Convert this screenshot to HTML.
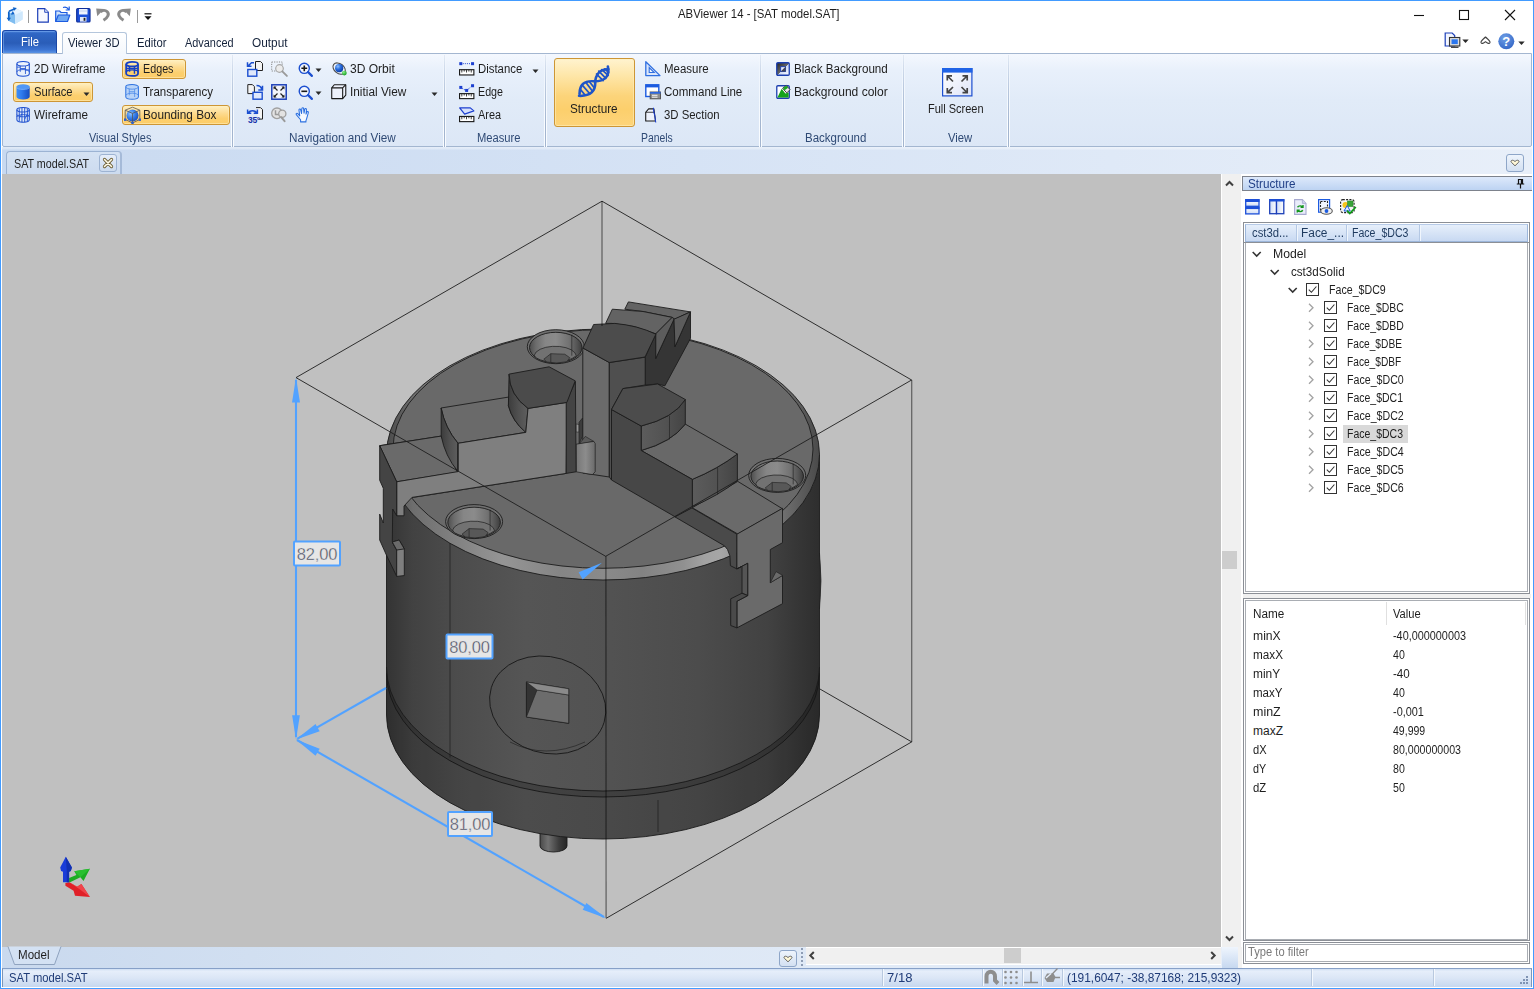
<!DOCTYPE html>
<html lang="en"><head><meta charset="utf-8"><title>ABViewer 14 - [SAT model.SAT]</title>
<style>
*{box-sizing:border-box;margin:0;padding:0}
html,body{width:1534px;height:989px;overflow:hidden;background:#fff}
body{font-family:"Liberation Sans",sans-serif;font-size:12px;color:#1e1e1e;position:relative}
.a{position:absolute}
.t{position:absolute;white-space:nowrap;line-height:14px;height:14px}
svg{position:absolute;overflow:visible}
/* window frame */
#frame{left:0;top:0;width:1534px;height:989px;border:1px solid #429bff;box-shadow:inset 0 0 0 1px #fff;pointer-events:none;z-index:50}
/* ribbon */
#ribbon{left:2px;top:53px;width:1530px;height:94px;border:1px solid #a3b6d0;border-radius:0 0 2px 2px;background:linear-gradient(#f4f8fe 0,#e8f0fb 18%,#e1ebf8 50%,#dce7f6 100%)}
.gsep{top:55px;width:3px;height:92px;margin-left:-1px;background:linear-gradient(90deg,#f9fcff 0,#f9fcff 1px,#a3b5cf 1px,#a3b5cf 2px,#f9fcff 2px,#f9fcff 3px);-webkit-mask-image:linear-gradient(to bottom,rgba(0,0,0,.2) 0,rgba(0,0,0,.7) 40%,#000 75%);mask-image:linear-gradient(to bottom,rgba(0,0,0,.2) 0,rgba(0,0,0,.7) 40%,#000 75%)}
.glabel{color:#2f4a75}
.hot{border:1px solid #cd9636;border-radius:3px;background:linear-gradient(#fff0c2 0,#fddb90 40%,#fccf6e 70%,#fdcd69 100%);box-shadow:inset 0 0 0 1px rgba(255,240,190,.55)}
.big{background:linear-gradient(#fff3cf 0,#fee6a8 25%,#fcd47a 55%,#fccf6c 75%,#fdd47a 100%)}
.rt{color:#15233b}
#filebtn{left:2px;top:30px;width:55px;height:23px;border-radius:3px 3px 0 0;border:1px solid #1a47a6;border-bottom:none;background:linear-gradient(#4a80d8 0,#2f66c4 12%,#2a5db8 55%,#3c74d2 85%,#5a94e6 100%);box-shadow:inset 1px 1px 0 rgba(120,170,240,.6)}
#tabact{left:62px;top:32px;width:65px;height:22px;border:1px solid #b4c6dc;border-bottom:none;border-radius:3px 3px 0 0;background:linear-gradient(#ffffff,#f3f7fc)}
#docrow{left:2px;top:147px;width:1530px;height:27px;background:linear-gradient(rgba(255,255,255,.45) 0,rgba(255,255,255,.3) 2px,rgba(255,255,255,0) 3px),linear-gradient(90deg,#c8d9f0 0,#d6e3f5 45%,#e8eff9 100%)}
#doctab{left:6px;top:151px;width:116px;height:23px;border:1px solid #9cb3d3;border-right:2px solid #a5bad8;border-bottom:none;border-radius:4px 4px 0 0;background:linear-gradient(#d5e2f3,#ccdbef)}
#viewport{left:2px;top:174px;width:1219px;height:773px;background:#c0c0c0}
#vscroll{left:1221px;top:174px;width:20px;height:773px;background:#f0f0f0;border-left:1px solid #fff}
#rightbg{left:1241px;top:174px;width:291px;height:793px;background:#fff}
#bottomrow{left:2px;top:947px;width:1239px;height:21px;background:linear-gradient(90deg,#c9d9ee 0,#d9e5f4 40%,#e8eff9 100%)}
#status{left:2px;top:968px;width:1530px;height:20px;border:1px solid #7e96b8;border-top:1px solid #86a0c8;background:linear-gradient(#cfdef3 0,#e6eefa 12%,#dbe6f6 50%,#c6d7ef 100%)}
.panel{background:#fff;border:1px solid #8e8f8f}
.tree .t{color:#1e1e1e}
</style></head><body>

<!-- title bar -->
<div class="t" style="left:678px;top:7px;color:#1e1e1e;transform:scaleX(0.947);transform-origin:0 50%">ABViewer 14 - [SAT model.SAT]</div>

<!-- QAT -->
<svg style="left:6px;top:7px" width="18" height="18" viewBox="0 0 18 18"><path d="M2,5L10,1.500l6.500,3v8l-7.500,4.500-7-3.500z" fill="#bfe0fb"/><path d="M2,5l7,3v9l-7-3.500z" fill="#7fbdf0"/><path d="M9,8l7.500-3.500v8l-7.500,4.500z" fill="#cfe8fc"/><path d="M2,5L10,1.500l6.500,3-7.500,3.500z" fill="#e6f4ff"/><g stroke="#0f62c8" stroke-width="1.700" fill="none"><path d="M2.800,4.500v7.500"/><path d="M3,4.300l5.500-2.300"/></g><g fill="#0f62c8"><path d="M0.600,10.800h4.400l-2.200,3.200z"/><path d="M6.800,0.300l4,0.700-2.600,2.700z"/><path d="M4.800,7.500l2-3.600 2,3.600z"/></g></svg>
<div class="a" style="left:28px;top:10px;width:1px;height:13px;background:#9a9a9a"></div>
<svg style="left:37px;top:8px" width="12" height="15" viewBox="0 0 12 15"><path d="M0.700,0.700h7l3.600,3.600v9.900H0.700z" fill="#f7f9ff" stroke="#1c3fb8" stroke-width="1.200"/><path d="M7.700,0.700v3.600h3.600" fill="#dde6fa" stroke="#1c3fb8" stroke-width="0.900"/></svg>
<svg style="left:55px;top:6px" width="16" height="17" viewBox="0 0 16 17"><path d="M0.700,15.500V5h4l1.300,1.500h6V9" fill="#cfe3fb" stroke="#1c5be0" stroke-width="1.200"/><path d="M0.700,15.500L3.300,9h11.500l-2.300,6.500z" fill="#6fa8f2" stroke="#1c5be0" stroke-width="1.200" stroke-linejoin="round"/><path d="M8,1.500c2.500-0.800 4.500,0 5.500,2M14.200,0.500v3.500h-3.500" fill="none" stroke="#1c5be0" stroke-width="1.200"/></svg>
<svg style="left:76px;top:8px" width="15" height="15" viewBox="0 0 15 15"><rect x="0.700" y="0.700" width="13.300" height="13.300" rx="1" fill="#1c4fd8" stroke="#0f2f9a" stroke-width="1.200"/><rect x="3" y="1" width="8.500" height="5.500" fill="#eef3ff"/><path d="M3,3h8.500" stroke="#b9c6e8" stroke-width="0.800"/><rect x="4" y="9" width="6.500" height="4.600" fill="#dfe6f7"/><rect x="7.600" y="9.800" width="1.800" height="3" fill="#222"/></svg>
<svg style="left:96px;top:8px" width="15" height="13" viewBox="0 0 15 13"><path d="M7.500,12.300c4.500-2.800 6.200-6.300 3.500-8.800c-2-1.800-4.800-1.200-6.500,0.500" fill="none" stroke="#8a8a8a" stroke-width="3"/><path d="M0.200,0.500l7.800,0.600-6.800,7.200z" fill="#8a8a8a"/></svg>
<svg style="left:116px;top:8px" width="15" height="13" viewBox="0 0 15 13"><path d="M7.500,12.300c-4.500-2.800-6.200-6.300-3.500-8.800c2-1.800 4.800-1.200 6.500,0.500" fill="none" stroke="#8a8a8a" stroke-width="3"/><path d="M14.800,0.500l-7.800,0.600 6.800,7.200z" fill="#8a8a8a"/></svg>
<div class="a" style="left:137px;top:10px;width:1px;height:13px;background:#9a9a9a"></div>
<svg style="left:144px;top:13px" width="8" height="8" viewBox="0 0 8 8"><path d="M0.500,0.800h7" stroke="#111" stroke-width="1.200"/><path d="M0.500,3.200h7l-3.500,3.800z" fill="#111"/></svg>
<!-- window controls -->
<svg style="left:1410px;top:6px" width="110" height="18" viewBox="0 0 110 18"><path d="M4,9.500h10" stroke="#111" stroke-width="1.100"/><rect x="49.500" y="4.500" width="9" height="9" fill="none" stroke="#111" stroke-width="1.100"/><path d="M95,4l10,10M105,4L95,14" stroke="#111" stroke-width="1.100"/></svg>
<!-- right mini icons -->
<svg style="left:1444px;top:32px" width="17" height="17" viewBox="0 0 17 17"><path d="M1.200,1h7l2.500,2.500V14H1.200z" fill="#f3f6ff" stroke="#1c3fb8" stroke-width="1.200"/><rect x="5.500" y="5.500" width="10.300" height="8.500" fill="#ddd" stroke="#333" stroke-width="1.100"/><rect x="7.500" y="7.300" width="6.300" height="4.800" fill="#2a76ee"/><path d="M7,15.300h7.500" stroke="#333" stroke-width="1.200"/></svg>
<svg style="left:1462px;top:39px" width="8" height="5"><path d="M0.300,0.500h6.400l-3.200,3.600z" fill="#2a2a2a"/></svg>
<svg style="left:1480px;top:36px" width="11" height="9" viewBox="0 0 11 9"><path d="M1,6.500c-0.500,-1.500 2.500,-3.500 4.500,-5.500c2,2 5,4 4.500,5.500c-0.600,1.500-2.500,1-4.500-0.800c-2,1.800-3.900,2.300-4.500,0.800z" fill="#fff" stroke="#444" stroke-width="1.100" stroke-linejoin="round"/></svg>
<svg style="left:1498px;top:33px" width="17" height="17" viewBox="0 0 17 17"><defs><radialGradient id="gHelp" cx="0.400" cy="0.300" r="0.800"><stop offset="0" stop-color="#6f9fe6"/><stop offset="1" stop-color="#2f62c4"/></radialGradient></defs><circle cx="8.300" cy="8.300" r="8" fill="url(#gHelp)"/><text x="8.300" y="13" text-anchor="middle" font-family="Liberation Sans, sans-serif" font-weight="bold" font-size="13" fill="#fff">?</text></svg>
<svg style="left:1518px;top:41px" width="8" height="5"><path d="M0.300,0.500h6.400l-3.200,3.600z" fill="#2a2a2a"/></svg>

<!-- tab row -->
<div class="a" id="filebtn"></div>
<div class="t" style="left:21px;top:35px;color:#fff;transform:scaleX(0.931);transform-origin:0 50%">File</div>
<div class="a" id="ribbon"></div>
<div class="a" id="tabact"></div>
<div class="t rt" style="left:68px;top:36px;transform:scaleX(0.934);transform-origin:0 50%">Viewer 3D</div>
<div class="t rt" style="left:137px;top:36px;transform:scaleX(0.941);transform-origin:0 50%">Editor</div>
<div class="t rt" style="left:185px;top:36px;transform:scaleX(0.909);transform-origin:0 50%">Advanced</div>
<div class="t rt" style="left:252px;top:36px;transform:scaleX(0.985);transform-origin:0 50%">Output</div>

<!-- group separators -->
<div class="a gsep" style="left:232px"></div>
<div class="a gsep" style="left:444px"></div>
<div class="a gsep" style="left:545px"></div>
<div class="a gsep" style="left:760px"></div>
<div class="a gsep" style="left:903px"></div>
<div class="a gsep" style="left:1008px"></div>
<!-- hot buttons -->
<div class="a hot" style="left:122px;top:59px;width:64px;height:20px"></div>
<div class="a hot" style="left:13px;top:82px;width:80px;height:20px"></div>
<div class="a hot" style="left:122px;top:105px;width:108px;height:20px"></div>
<div class="a hot big" style="left:554px;top:58px;width:81px;height:69px"></div>
<!-- labels -->
<div class="t" style="left:34px;top:62px;transform:scaleX(0.966);transform-origin:0 50%">2D Wireframe</div>
<div class="t" style="left:34px;top:85px;transform:scaleX(0.933);transform-origin:0 50%">Surface</div>
<div class="t" style="left:34px;top:108px;transform:scaleX(0.976);transform-origin:0 50%">Wireframe</div>
<div class="t" style="left:143px;top:62px;transform:scaleX(0.896);transform-origin:0 50%">Edges</div>
<div class="t" style="left:143px;top:85px;transform:scaleX(0.960);transform-origin:0 50%">Transparency</div>
<div class="t" style="left:143px;top:108px;transform:scaleX(0.983);transform-origin:0 50%">Bounding Box</div>
<div class="t glabel" style="left:89px;top:131px;transform:scaleX(0.911);transform-origin:0 50%">Visual Styles</div>
<div class="t" style="left:350px;top:62px;transform:scaleX(1.003);transform-origin:0 50%">3D Orbit</div>
<div class="t" style="left:350px;top:85px;transform:scaleX(0.985);transform-origin:0 50%">Initial View</div>
<div class="t glabel" style="left:289px;top:131px;transform:scaleX(0.978);transform-origin:0 50%">Navigation and View</div>
<div class="t" style="left:478px;top:62px;transform:scaleX(0.947);transform-origin:0 50%">Distance</div>
<div class="t" style="left:478px;top:85px;transform:scaleX(0.892);transform-origin:0 50%">Edge</div>
<div class="t" style="left:478px;top:108px;transform:scaleX(0.907);transform-origin:0 50%">Area</div>
<div class="t glabel" style="left:477px;top:131px;transform:scaleX(0.932);transform-origin:0 50%">Measure</div>
<div class="t" style="left:570px;top:102px;transform:scaleX(0.978);transform-origin:0 50%">Structure</div>
<div class="t" style="left:664px;top:62px;transform:scaleX(0.955);transform-origin:0 50%">Measure</div>
<div class="t" style="left:664px;top:85px;transform:scaleX(0.962);transform-origin:0 50%">Command Line</div>
<div class="t" style="left:664px;top:108px;transform:scaleX(0.947);transform-origin:0 50%">3D Section</div>
<div class="t glabel" style="left:641px;top:131px;transform:scaleX(0.866);transform-origin:0 50%">Panels</div>
<div class="t" style="left:794px;top:62px;transform:scaleX(0.970);transform-origin:0 50%">Black Background</div>
<div class="t" style="left:794px;top:85px;transform:scaleX(1.004);transform-origin:0 50%">Background color</div>
<div class="t glabel" style="left:805px;top:131px;transform:scaleX(0.957);transform-origin:0 50%">Background</div>
<div class="t" style="left:928px;top:102px;transform:scaleX(0.916);transform-origin:0 50%">Full Screen</div>
<div class="t glabel" style="left:948px;top:131px;transform:scaleX(0.938);transform-origin:0 50%">View</div>
<!-- dropdown arrows -->
<svg style="left:82.5px;top:92px" width="8" height="5"><path d="M0.5,0.5h6l-3,3.4z" fill="#2a2a2a"/></svg>
<svg style="left:314.5px;top:68px" width="8" height="5"><path d="M0.5,0.5h6l-3,3.4z" fill="#2a2a2a"/></svg>
<svg style="left:314.5px;top:91px" width="8" height="5"><path d="M0.5,0.5h6l-3,3.4z" fill="#2a2a2a"/></svg>
<svg style="left:431px;top:92px" width="8" height="5"><path d="M0.5,0.5h6l-3,3.4z" fill="#2a2a2a"/></svg>
<svg style="left:532px;top:69px" width="8" height="5"><path d="M0.5,0.5h6l-3,3.4z" fill="#2a2a2a"/></svg>
<!-- 2D Wireframe -->
<svg style="left:16px;top:61px" width="14.2" height="16" viewBox="0 0 15 17"><g fill="none" stroke="#1d4fcf" stroke-width="1.1"><ellipse cx="7.5" cy="3" rx="6.6" ry="2.4"/><path d="M0.9,3v10.5a6.6,2.6 0 0 0 13.2,0V3"/><path d="M0.9,11.5a6.6,2.4 0 0 1 13.2,0" stroke-width="0.9"/><path d="M4.5,5v6.5M10,5.3v8.5M4.5,8h5.5M1,6.5h3.5M10,9.5h4" stroke-width="0.9"/></g></svg>
<!-- Surface -->
<svg style="left:16px;top:84px" width="14.2" height="16" viewBox="0 0 15 17"><defs><linearGradient id="gSf" x1="0" x2="1"><stop offset="0" stop-color="#3f8df3"/><stop offset="0.35" stop-color="#2f7df0"/><stop offset="1" stop-color="#164dc0"/></linearGradient></defs><path d="M0.5,3v10.5a7,2.9 0 0 0 14,0V3z" fill="url(#gSf)"/><ellipse cx="7.5" cy="3" rx="7" ry="2.7" fill="#4f97f5"/><path d="M0.6,3.6a7,2.6 0 0 0 13.8,0" fill="none" stroke="#8fc0ff" stroke-width="0.7"/></svg>
<!-- Wireframe -->
<svg style="left:16px;top:107px" width="14.2" height="16" viewBox="0 0 15 17"><g fill="none" stroke="#1d4fcf" stroke-width="1.1"><ellipse cx="7.5" cy="3" rx="6.6" ry="2.4"/><path d="M0.9,3v10.5a6.6,2.6 0 0 0 13.2,0V3"/><path d="M3.4,1.5v14M6.3,0.8v15.5M9.2,0.8v15.5M12,1.5v14" stroke-width="1"/><path d="M0.9,8a6.6,2.4 0 0 0 13.2,0M0.9,10.5a6.6,2.4 0 0 1 13.2,0" stroke-width="0.9"/><path d="M3.4,12l3-5M9.2,13l3-6" stroke-width="0.8"/></g></svg>
<!-- Edges -->
<svg style="left:125px;top:61px" width="14.2" height="16" viewBox="0 0 15 17"><g fill="none" stroke="#1540c4" stroke-width="1.9"><ellipse cx="7.5" cy="3.4" rx="6.3" ry="2.4"/><path d="M1.2,3.4v9.8a6.3,2.6 0 0 0 12.6,0V3.4"/><path d="M1.2,11.8a6.3,2.4 0 0 1 12.6,0" stroke-width="1.5"/><path d="M4.8,5.4v6M10,5.5v8M1.2,8h12.4" stroke-width="1.5"/></g></svg>
<!-- Transparency -->
<svg style="left:125px;top:84px" width="14.2" height="16" viewBox="0 0 15 17"><path d="M0.8,3v10.5a6.7,2.7 0 0 0 13.4,0V3a6.7,2.5 0 0 0 -13.4,0z" fill="#a9cbf7" fill-opacity="0.75" stroke="#2f73e0" stroke-width="1.1"/><path d="M0.8,3a6.7,2.5 0 0 0 13.4,0" fill="none" stroke="#4a88e8" stroke-width="0.9"/><path d="M4.5,5v7M10.2,5.3v8.5M4.5,8.2h5.7M1,11.6a6.7,2.4 0 0 1 13,0" fill="none" stroke="#4a88e8" stroke-width="0.8"/></svg>
<!-- Bounding box -->
<svg style="left:124px;top:106px" width="17" height="18" viewBox="0 0 17 18"><defs><radialGradient id="gBb" cx="0.35" cy="0.35" r="0.7"><stop offset="0" stop-color="#8fc4ff"/><stop offset="0.5" stop-color="#3a82ea"/><stop offset="1" stop-color="#1a50c0"/></radialGradient></defs><circle cx="8.5" cy="9.5" r="6" fill="url(#gBb)"/><g fill="none" stroke="#555" stroke-width="0.8"><path d="M1.2,4.2L8.5,1.2l7.3,3v9.2l-7.3,3.6-7.3-3.6z"/><path d="M1.2,4.2l7.3,3.2 7.3-3.2M8.5,7.4v9.6"/></g><g fill="#2a5fd0"><rect x="0" y="12.5" width="2.4" height="2.4"/><rect x="14.6" y="12.5" width="2.4" height="2.4"/><rect x="7.3" y="15.6" width="2.4" height="2.4"/></g></svg>

<!-- nav col 1 -->
<svg style="left:247px;top:61px" width="16" height="16" viewBox="0 0 16 16"><path d="M8.5,0.5h5l2,2v7h-7z" fill="#f4f4f4" stroke="#222" stroke-width="1"/><rect x="0.8" y="8.5" width="9" height="6.7" fill="#dfe8fb" stroke="#1c4fd0" stroke-width="1.4"/><path d="M0.5,1.2v4h4M1,5l3.5-3.2h2.5" fill="none" stroke="#1c4fd0" stroke-width="1.5"/></svg>
<svg style="left:247px;top:84px" width="16" height="16" viewBox="0 0 16 16"><path d="M0.8,0.6h4.6l2,2v7H0.8z" fill="#f4f4f4" stroke="#222" stroke-width="1"/><rect x="6" y="8.3" width="9.2" height="6.9" fill="#dfe8fb" stroke="#1c4fd0" stroke-width="1.4"/><path d="M9.5,1.5c3,0 4.8,1.2 5.3,4M15.5,1.8v4.2h-4.2" fill="none" stroke="#1c4fd0" stroke-width="1.5"/></svg>
<svg style="left:247px;top:107px" width="17" height="16" viewBox="0 0 17 16"><path d="M9,0.6h4.5l2,2v9.5h-4" fill="#f4f4f4" stroke="#222" stroke-width="1"/><path d="M1.5,5.5c1.5-2.5 6-2.5 8,0M0.6,2.5v3.7h3.7M10.4,2.5v3.7h-3.7" fill="none" stroke="#1c4fd0" stroke-width="1.5"/><text x="1" y="15.8" font-family="Liberation Sans, sans-serif" font-size="8.5" font-weight="bold" fill="#1430a8" letter-spacing="-0.3">35°</text></svg>
<!-- nav col 2 -->
<svg style="left:271px;top:61px" width="17" height="17" viewBox="0 0 17 17"><rect x="0.7" y="1" width="10.5" height="9" fill="none" stroke="#8a8a8a" stroke-width="1" stroke-dasharray="1.2 1.2"/><circle cx="8.5" cy="7.5" r="3.8" fill="#ececec" stroke="#a8a8a8" stroke-width="1.2"/><path d="M11.3,10.3l4.6,4.6" stroke="#9a9a9a" stroke-width="1.9" stroke-linecap="round"/></svg>
<svg style="left:271px;top:84px" width="16" height="16" viewBox="0 0 16 16"><rect x="0.8" y="0.8" width="14.4" height="14.4" fill="#f2f4fb" stroke="#1c3fb8" stroke-width="1.5"/><g stroke="#222" stroke-width="1.2" fill="#222"><path d="M6.5,6.5L3,3M9.5,6.5L13,3M6.5,9.5L3,13M9.5,9.5L13,13"/><path d="M2.6,2.6h3l-3,3zM13.4,2.6h-3l3,3zM2.6,13.4h3l-3-3zM13.4,13.4h-3l3-3z" stroke="none"/></g></svg>
<svg style="left:271px;top:107px" width="17" height="16" viewBox="0 0 17 16"><circle cx="6" cy="6.3" r="5.3" fill="#e3e3e3" stroke="#a0a0a0" stroke-width="1.3"/><path d="M4.5,3.2v4.3h4" fill="none" stroke="#9a9a9a" stroke-width="1.5"/><circle cx="11.3" cy="6.8" r="3.6" fill="#e3e3e3" stroke="#a0a0a0" stroke-width="1.3"/><path d="M10.2,10.2l3.4,4" stroke="#9a9a9a" stroke-width="2" stroke-linecap="round"/></svg>
<!-- zoom in / out -->
<svg style="left:298px;top:62px" width="15" height="16" viewBox="0 0 16 17"><circle cx="6.7" cy="6.7" r="5.4" fill="#f1f5fd" stroke="#1c4fd0" stroke-width="1.5"/><path d="M3.6,6.7h6.2M6.7,3.6v6.2" stroke="#1a1a1a" stroke-width="1.7"/><path d="M10.8,10.8l4,4" stroke="#1c4fd0" stroke-width="2.4" stroke-linecap="round"/></svg>
<svg style="left:298px;top:85px" width="15" height="16" viewBox="0 0 16 17"><circle cx="6.7" cy="6.7" r="5.4" fill="#f1f5fd" stroke="#1c4fd0" stroke-width="1.5"/><path d="M3.6,6.7h6.2" stroke="#1a1a1a" stroke-width="1.7"/><path d="M10.8,10.8l4,4" stroke="#1c4fd0" stroke-width="2.4" stroke-linecap="round"/></svg>
<!-- hand -->
<svg style="left:295px;top:106.5px" width="15.5" height="16" viewBox="0 0 18 18"><path d="M6.5,17v-2.5L1.5,8.6c-0.8-1.3 0.8-2.2 1.7-1.2l2.3,2.6L4.6,3.4c-0.2-1.5 1.7-1.8 2-0.4l1,4.3L7.9,1.7c0-1.5 2-1.5 2.1-0.1l0.5,5.4 0.8-4.6c0.3-1.4 2.1-1.1 2,0.3l-0.5,5.3 1-2.4c0.5-1.2 2.1-0.6 1.7,0.7l-1.8,6.3c-0.3,1.4-0.8,2.4-1,3.2V17z" fill="#f5f9ff" stroke="#2a6fe0" stroke-width="1.2" stroke-linejoin="round"/></svg>
<!-- 3D orbit -->
<svg style="left:331.5px;top:61px" width="15.5" height="15.5" viewBox="0 0 18 18"><defs><radialGradient id="gOrb" cx="0.35" cy="0.3" r="0.75"><stop offset="0" stop-color="#8fc0ff"/><stop offset="0.45" stop-color="#2a6fe0"/><stop offset="1" stop-color="#0c3aa0"/></radialGradient><radialGradient id="gGrn" cx="0.35" cy="0.3" r="0.75"><stop offset="0" stop-color="#8af08a"/><stop offset="1" stop-color="#0f9a1c"/></radialGradient></defs><ellipse cx="8.3" cy="8.8" rx="8" ry="5.6" transform="rotate(38 8.3 8.8)" fill="none" stroke="#4a4a4a" stroke-width="1.2"/><circle cx="8.3" cy="8.3" r="4.7" fill="url(#gOrb)"/><circle cx="14.3" cy="14" r="2.8" fill="url(#gGrn)"/></svg>
<!-- initial view cube -->
<svg style="left:331px;top:84px" width="15.5" height="15.5" viewBox="0 0 17 17"><path d="M0.8,4.2L3.6,0.8h12.6v11.4l-3.4,3.8H0.8z" fill="#eef2fc" stroke="#1a1a1a" stroke-width="1.2" stroke-linejoin="round"/><path d="M0.8,4.2h12v11.8M12.8,4.2l3.4-3.4" fill="none" stroke="#1a1a1a" stroke-width="1.2"/></svg>

<!-- measure group -->
<svg style="left:459px;top:61px" width="16" height="15.5" viewBox="0 0 17 16"><rect x="0.6" y="9" width="15.2" height="5.6" fill="#fff" stroke="#1a1a1a" stroke-width="1.2"/><path d="M3,9v3M5.5,9v2M8,9v3M10.5,9v2M13,9v3" stroke="#1a1a1a" stroke-width="0.9"/><rect x="0.3" y="1" width="3.2" height="3.2" fill="#1c3fd0"/><rect x="12.8" y="1" width="3.2" height="3.2" fill="#1c3fd0"/><path d="M4,2.6h8.5" stroke="#1c3fd0" stroke-width="1" stroke-dasharray="1.1 1.1"/></svg>
<svg style="left:459px;top:84px" width="16" height="15.5" viewBox="0 0 17 16"><rect x="0.6" y="10" width="15.2" height="5.3" fill="#fff" stroke="#1a1a1a" stroke-width="1.2"/><path d="M3,10v3M5.5,10v2M8,10v3M10.5,10v2M13,10v3" stroke="#1a1a1a" stroke-width="0.9"/><rect x="0.3" y="1.8" width="3.2" height="3.2" fill="#1c3fd0"/><rect x="12.8" y="0" width="3.2" height="3.2" fill="#1c3fd0"/><rect x="6.5" y="5" width="3.2" height="3.2" fill="#1c3fd0"/><path d="M3.5,4.5l3.5,2M9.5,5.5l3.5-3" stroke="#1c3fd0" stroke-width="1" stroke-dasharray="1.1 1.1"/></svg>
<svg style="left:459px;top:107px" width="16" height="15.5" viewBox="0 0 17 16"><rect x="0.6" y="9.8" width="15.2" height="5.5" fill="#fff" stroke="#1a1a1a" stroke-width="1.2"/><path d="M3,9.8v3M5.5,9.8v2M8,9.8v3M10.5,9.8v2M13,9.8v3" stroke="#1a1a1a" stroke-width="0.9"/><path d="M0.7,0.7h11.3l3.8,3.2-9.8,3.4z" fill="#d6e0fb" stroke="#1c3fd0" stroke-width="1.3" stroke-linejoin="round"/></svg>

<!-- DNA -->
<svg style="left:576.3px;top:65px" width="42.5" height="32.3" viewBox="0 0 42 34" preserveAspectRatio="none"><g fill="none" stroke="#1f55c8" stroke-linecap="round"><path d="M31.5,1.5c2.5,13-6,16-14.5,15.5C8,16.5 3.5,21 3.5,30.500" stroke-width="2.6"/><path d="M3,32.500c12,0.500 16-5.500 16-13.500C19,10 24,4 32,4.500" stroke-width="2.6"/><path d="M22.500,6.500l7,7.500M20.300,9.500l6.500,7M25.500,4.800l6.300,6.200M28.500,4l3.700,3.800M6.500,21.500l6.500,8M10,18.800l6,8.200M13.500,18l4.500,6M4.200,25.500l4.300,5.500" stroke-width="1.8"/></g></svg>

<!-- panels small icons -->
<svg style="left:645px;top:61px" width="16" height="16" viewBox="0 0 16 16"><path d="M0.8,0.8v13.8h14.2z" fill="#dbe6fb" stroke="#2f6fe0" stroke-width="1.3" stroke-linejoin="round"/><path d="M4.2,6.5v5h5z" fill="#f3f7ff" stroke="#2f6fe0" stroke-width="1.1"/></svg>
<svg style="left:645px;top:84px" width="17" height="16" viewBox="0 0 17 16"><rect x="0.8" y="0.8" width="13" height="11.7" fill="#fff" stroke="#1c5be0" stroke-width="1.4"/><rect x="0.8" y="0.8" width="13" height="2.6" fill="#1c5be0"/><rect x="5.2" y="8" width="10.3" height="6.8" fill="#8e8e8e" stroke="#555" stroke-width="1"/><rect x="5.2" y="8" width="10.3" height="1.7" fill="#2a66e0"/><path d="M7,11.3h5.5M7,13.200h5.500" stroke="#fff" stroke-width="0.9"/></svg>
<svg style="left:645px;top:107px" width="14.5" height="16.5" viewBox="0 0 16 17"><path d="M0.8,5.2L4,1.500h5.800l1.800,13.300H0.800z" fill="#eef2fc" stroke="#1a1a1a" stroke-width="1.2" stroke-linejoin="round"/><path d="M0.8,5.2h9.300" stroke="#1a1a1a" stroke-width="0.9" fill="none"/><path d="M9.300,0.300c0.300,3 0.300,5 1.200,7.500s0.600,5 1.400,8.700" fill="none" stroke="#1c3fd0" stroke-width="1.200"/></svg>

<!-- background group -->
<svg style="left:776px;top:62px" width="14" height="14" viewBox="0 0 15 15"><defs><linearGradient id="gBk" x1="0" y1="0" x2="1" y2="1"><stop offset="0" stop-color="#222"/><stop offset="0.5" stop-color="#666"/><stop offset="0.5" stop-color="#c9d6f5"/><stop offset="1" stop-color="#fff"/></linearGradient></defs><rect x="0.8" y="0.8" width="13.4" height="13.400" rx="1.2" fill="url(#gBk)" stroke="#1c3fb0" stroke-width="1.400"/><rect x="5" y="5" width="5.200" height="5.200" fill="#e6ecfb" stroke="#1c3fb0" stroke-width="1"/><path d="M5,10.200l5.200-5.200v5.200z" fill="#445"/></svg>
<svg style="left:776px;top:85px" width="15" height="14" viewBox="0 0 16 15"><rect x="0.8" y="0.8" width="13.400" height="13.400" rx="1.200" fill="#fff" stroke="#1c3fb0" stroke-width="1.400"/><path d="M1.500,13.500L6,4l4,5 3.500,-1v5.500z" fill="#14a21c"/><path d="M7,3.500l4-3 4,4.500-3.500,3.500z" fill="#e8e8e8" stroke="#333" stroke-width="1"/><path d="M7.500,3.300l3.500-2.600 2,2.200-3.800,2.600z" fill="#18a820"/></svg>

<!-- full screen -->
<svg style="left:942px;top:68px" width="31" height="29" viewBox="0 0 31 29"><defs><linearGradient id="gFs" x1="0" y1="0" x2="1" y2="1"><stop offset="0" stop-color="#fff"/><stop offset="1" stop-color="#dfe5f8"/></linearGradient></defs><rect x="0.600" y="0.600" width="29.300" height="27.300" fill="url(#gFs)" stroke="#1c4fd0" stroke-width="1.200"/><rect x="0" y="0" width="30.500" height="4.600" fill="#1f63e6"/><g stroke="#444" stroke-width="1.700" fill="none"><path d="M5.500,8l5.500,5.500M5.300,12.500v-4.700h4.700"/><path d="M25,8l-5.500,5.500M25.200,12.500v-4.700h-4.700"/><path d="M5.500,24.500l5.500-5.500M5.300,20v4.700h4.700"/><path d="M25,24.500l-5.500-5.500M25.200,20v4.700h-4.700"/></g></svg>



<!-- doc tab row -->
<div class="a" id="docrow"></div>
<div class="a" id="doctab"></div>
<div class="t" style="left:14px;top:157px;transform:scaleX(0.893);transform-origin:0 50%">SAT model.SAT</div>

<div class="a" style="left:99px;top:154px;width:18px;height:18px;border:1px solid #9db3d2;border-radius:3px;background:linear-gradient(#e6eefa,#cbdaee)"></div>
<svg style="left:103px;top:158px" width="10" height="10" viewBox="0 0 10 10"><path d="M1.500,1.500L8.500,8.500M8.500,1.500L1.500,8.500" stroke="#6b5d33" stroke-width="3.200" stroke-linecap="round"/><path d="M1.500,1.500L8.500,8.500M8.500,1.500L1.500,8.500" stroke="#fffbe8" stroke-width="1.600" stroke-linecap="round"/></svg>
<div class="a" style="left:1506px;top:154px;width:18px;height:18px;border:1px solid #8ea6c8;border-radius:3px;background:linear-gradient(#eef4fc,#d3e0f2)"></div>
<svg style="left:1510px;top:159px" width="10" height="8" viewBox="0 0 10 8"><path d="M5,6.800L1.300,3.200c-1.200-1.500 1.200-3.200 3.700-0.700c2.500-2.500 4.900-0.800 3.700,0.700z" fill="#fff8d8" stroke="#555" stroke-width="0.900"/></svg>
<!-- viewport -->
<div class="a" id="viewport"></div>
<svg id="model" class="a" style="left:0;top:0" width="1534" height="989" viewBox="0 0 1534 989">
<defs>
<linearGradient id="gBody" x1="387" x2="819" y1="0" y2="0" gradientUnits="userSpaceOnUse">
<stop offset="0" stop-color="#343434"/><stop offset="0.06" stop-color="#424242"/><stop offset="0.16" stop-color="#4c4c4c"/><stop offset="0.32" stop-color="#555555"/><stop offset="0.52" stop-color="#525252"/><stop offset="0.72" stop-color="#4c4c4c"/><stop offset="0.88" stop-color="#424242"/><stop offset="1" stop-color="#2e2e2e"/>
</linearGradient>
<linearGradient id="gCham" x1="387" x2="819" y1="0" y2="0" gradientUnits="userSpaceOnUse">
<stop offset="0" stop-color="#4a4a4a"/><stop offset="0.06" stop-color="#6e6e6e"/><stop offset="0.215" stop-color="#8c8c8c"/><stop offset="0.27" stop-color="#959595"/><stop offset="0.4" stop-color="#858585"/><stop offset="0.5" stop-color="#8a8a8a"/><stop offset="0.59" stop-color="#838383"/><stop offset="0.685" stop-color="#909090"/><stop offset="0.735" stop-color="#a2a2a2"/><stop offset="0.77" stop-color="#a6a6a6"/><stop offset="0.9" stop-color="#777"/><stop offset="1" stop-color="#4a4a4a"/>
</linearGradient>
<linearGradient id="gHole" x1="0" x2="1" y1="0" y2="0">
<stop offset="0" stop-color="#4e4e4e"/><stop offset="0.12" stop-color="#6c6c6c"/><stop offset="0.3" stop-color="#868686"/><stop offset="0.5" stop-color="#8b8b8b"/><stop offset="0.75" stop-color="#727272"/><stop offset="0.9" stop-color="#555"/><stop offset="1" stop-color="#3c3c3c"/>
</linearGradient>
<linearGradient id="gCurve1" x1="0" x2="1" y1="0" y2="0">
<stop offset="0" stop-color="#3c3c3c"/><stop offset="0.5" stop-color="#505050"/><stop offset="1" stop-color="#5e5e5e"/>
</linearGradient>
<linearGradient id="gCurve3" x1="0" x2="1" y1="0" y2="0">
<stop offset="0" stop-color="#5c5c5c"/><stop offset="0.55" stop-color="#525252"/><stop offset="1" stop-color="#444"/>
</linearGradient>
<linearGradient id="gPin" x1="0" x2="1" y1="0" y2="0"><stop offset="0" stop-color="#4a4a4a"/><stop offset="0.3" stop-color="#707070"/><stop offset="0.7" stop-color="#3c3c3c"/><stop offset="1" stop-color="#262626"/></linearGradient>
<linearGradient id="gCyl" x1="0" x2="1" y1="0" y2="0">
<stop offset="0" stop-color="#777"/><stop offset="0.5" stop-color="#8c8c8c"/><stop offset="1" stop-color="#6a6a6a"/>
</linearGradient>
</defs>
<g stroke="#1c1c1c" stroke-width="0.9" stroke-linejoin="round">
<!-- pin -->
<path d="M540,832 L540,846 A13.5,6 0 0 0 567,846 L567,832 Z" fill="url(#gPin)"/>
<!-- body -->
<path d="M386.5,454.500 L386.5,715 A216.5,124 0 0 0 819.5,715 L819.5,454.500 A216.5,125 0 0 1 386.5,454.500 Z" fill="url(#gBody)"/>
<!-- groove -->
<path d="M386.5,667 A216.5,124 0 0 0 819.5,667" fill="none"/>
<path d="M386.5,673 A216.5,124 0 0 0 819.5,673" fill="none"/>
<path d="M386.5,673 A216.5,124 0 0 0 819.5,673 L819.5,715 A216.5,124 0 0 1 386.5,715 Z" fill="rgba(0,0,0,0.10)" stroke="none"/>
<path d="M386.5,667 A216.5,124 0 0 0 819.5,667 L819.5,673 A216.5,124 0 0 1 386.5,673 Z" fill="rgba(0,0,0,0.22)" stroke="none"/>
<path d="M450,440 L450,757.500" fill="none" stroke-width="0.7"/>
<path d="M658,800 L658,832" fill="none" stroke-width="0.7"/>
<!-- chamfer -->
<ellipse cx="603" cy="454.500" rx="216.5" ry="125.500" fill="url(#gCham)"/>
<!-- top face -->
<ellipse cx="603" cy="449" rx="210" ry="119.300" fill="#696969"/>
</g>
<!--MD1--><defs>
<g id="hole">
<ellipse cx="0" cy="0" rx="28.5" ry="17" fill="#707070"/>
<ellipse cx="0" cy="0.8" rx="26.3" ry="15.2" fill="url(#gHole)"/>
<path d="M-21.5,8.5 A21,10 0 0 1 19,6 L20.5,9 A26.3,15.2 0 0 1 -20,11 Z" fill="#727272" stroke-width="0.7"/>
<path d="M-12,12.5 L-5,7 L9,7.5 L14,11 L11,15 A26.3,15.2 0 0 1 -9,15.3 Z" fill="#585858" stroke-width="0.6"/>
<path d="M-5,7 L-5,15.5 M16,-12 L16,9" fill="none" stroke-width="0.6"/>
</g>
</defs>
<g stroke="#1c1c1c" stroke-width="0.9" stroke-linejoin="round">
<use href="#hole" x="555.8" y="346.7"/>
<use href="#hole" x="474.1" y="521.6"/>
<use href="#hole" x="777.2" y="475.4"/>

<!-- slot / face lines on top -->
<path d="M410.4,497.8 L566.2,473.4" fill="none"/>
<path d="M379.7,445.7 L441.2,436.1" fill="none"/>

<!-- JAW 2 (back) -->
<polygon points="624.8,309.2 628.4,301.9 690.5,311.9 674.9,319.2 672.2,317.4 643,311.5" fill="#636363"/>
<polygon points="605.6,323.4 612.3,309.2 643,311.5 672.2,317.4 655.8,333.8 634,326.5 612,323.4" fill="#636363"/>
<polygon points="645.2,357.2 655.8,333.8 655.8,358.4 674,319.2 675,346.6 690.5,311.9 690.5,338.4 664.9,385.8 657.6,384 645.2,385" fill="#353535"/>
<polygon points="655.8,333.8 672.2,317.4 674,319.2 655.8,358.4" fill="#5c5c5c"/>
<polygon points="674,319.2 690.5,311.9 675,346.6" fill="#5c5c5c"/>
<polygon points="582.8,348 609.3,362.5 609.3,477 582.8,473" fill="#6b6b6b"/>
<polygon points="609.3,362.5 645.2,357.2 645.2,385 622.9,388.6 611.5,409.5 611.5,480 609.3,477" fill="#4f4f4f"/>
<path d="M593.6,324.5 L614.8,323.4 Q638,325.5 655.9,334.2 L645,357 L609.2,362.5 L583,348 Z" fill="#4c4c4c"/>

<!-- centre bits -->
<polygon points="576.1,424 579,424.5 579,432 576.1,432" fill="#959595" stroke-width="0.5"/>
<polygon points="579,422.3 582.5,418 582.5,436.4 579,444.2" fill="#3c3c3c" stroke-width="0.6"/>
<polygon points="579,444.2 585.3,436.4 593.8,441.4" fill="#5a5a5a" stroke-width="0.6"/>
<path d="M576.1,444.2 L593.8,441.4 L595.2,443.5 L595.2,471.8 L592.4,474.6 L576.1,471.8 Z" fill="url(#gCyl)" stroke-width="0.7"/>

<!-- JAW 1 (left) -->
<polygon points="379.7,445.7 441.2,436.1 457.4,472.1 396.7,481.8" fill="#6a6a6a"/>
<path d="M441,408 L509,397 L508.4,405.7 Q512.4,421.3 525.8,432.4 L458,443.3 Q445,428 441,408 Z" fill="#6a6a6a"/>
<path d="M441.2,408 Q445,428 458,443.3 L458,471.6 Q445,456 441.2,436 Z" fill="url(#gCurve1)"/>
<path d="M509.1,374.1 Q509.5,395 528,408.4 L525.8,432.4 Q512.4,421.3 508.4,405.7 Z" fill="url(#gCurve1)"/>
<polygon points="528,408.4 566.9,402.4 566.2,473.4 412,497.4 404,506 404,515.8 396.7,515.8 396.7,481.8 458,471.6 458,443.3 525.8,432.4" fill="#7f7f7f"/>
<path d="M458,471.6 L458,443.3" fill="none"/>
<polygon points="566.2,402.2 575.4,381.5 576.1,471.8 566.2,473.4" fill="#444"/>
<path d="M509.1,374.1 L549.1,366.8 L575.2,380.8 L566.9,402.4 L528,408.4 Q509.5,395 509.1,374.1 Z" fill="#4b4b4b"/>
<polygon points="379.7,445.7 396.7,481.8 396.7,515.8 392.7,509 392.3,542 396.7,550 396.7,576.4 386.2,554.6 379.7,540 379.7,514.1 383.3,523 383.3,488.3 379.7,480.2" fill="#444"/>
<polygon points="392.3,542 399.1,540 404.3,548.9 404.3,575.6 396.7,576.4 396.7,550" fill="#7f7f7f"/>
<polygon points="392.3,542 399.1,540 404.3,548.9 396.7,550" fill="#6a6a6a"/>

<!-- JAW 3 (right) -->
<polygon points="674.6,516.7 691.5,507.7 736.9,534.2 736.9,568.9 730.4,565.7 729.9,555.8 727.5,549.5 724.6,545.9" fill="#4a4a4a"/>
<polygon points="692.3,507.7 737.8,481.4 782.3,508.7 737.8,534" fill="#6a6a6a"/>
<path d="M692.3,479.4 Q717.6,469 737.4,454 L737.4,480.8 Q717.6,496 692.3,506.7 Z" fill="url(#gCurve3)"/>
<path d="M717.6,467.3 L717.6,494.6" fill="none" stroke-width="0.6"/>
<path d="M641.2,450.5 Q672,442 685.3,424.1 L737.4,454 Q717.6,469 692.3,479.4 Z" fill="#686868"/>
<path d="M641.2,426 Q674,418 685.3,399.5 L685.3,424.1 Q672,442 641.2,450.5 Z" fill="url(#gCurve3)"/>
<path d="M669.5,416 L669.5,439.500" fill="none" stroke-width="0.6"/>
<polygon points="611.5,409.5 641.2,426 641.2,450.5 692.3,479.4 692.3,507.7 675.1,516.8 611.5,480" fill="#474747"/>
<path d="M622.9,388.6 L657.6,384 L685.3,399.5 Q674,418 641.2,426 L611.5,409.5 Z" fill="#4c4c4c"/>
<!-- T end -->
<polygon points="736.9,534.2 782.5,508.3 782.5,542.7 770.3,549.5 770.3,582.7 782.5,575.4 782.5,603.7 736.9,627.9 736.9,601.3 747.7,595.6 747.7,563.3 736.9,568.9" fill="#6a6a6a"/>
<polygon points="736.9,568.9 747.7,563.3 747.7,595.6 742,593.2 742,566.3" fill="#555"/>
<polygon points="730.7,598.8 742,593.2 747.7,595.6 736.9,601.3 736.9,627.9 730.7,625.5" fill="#4a4a4a"/>
<polygon points="770.3,582.7 776,571.6 782.5,575.4" fill="#6a6a6a" stroke-width="0.6"/>
<path d="M819.5,553 Q822.5,580 819.5,609" fill="#333" stroke-width="0.7"/>

<!-- drive hole -->
<ellipse cx="547.7" cy="705" rx="59" ry="48" transform="rotate(17 547.7 705)" fill="none"/>
<path d="M510,742 Q545,760 585,742" fill="none" stroke-width="0.6"/>
<polygon points="526.4,682 568.7,688.8 568.7,723.3 526.4,717" fill="#333"/>
<polygon points="537,690 568.7,695 568.7,723.3 526.4,717" fill="#6c6c6c" stroke-width="0.6"/>
<polygon points="526.4,682 568.7,688.8 568.7,695 537,690" fill="#8a8a8a" stroke-width="0.5"/>
</g>

<!-- bounding box -->
<g stroke="#1e1e1e" stroke-width="0.9" fill="none">
<path d="M296,377.6 L602,201.2 L911.6,380 L605.7,556.3 Z"/>
<path d="M606.2,918.3 L911.7,741.9"/>
<path d="M911.7,741.9 L818.5,688.2"/>
</g>
<g stroke="#000" stroke-opacity="0.48" stroke-width="1.3" fill="none">
<path d="M605.9,556.3 L606.1,918.3"/>
<path d="M911.7,380 L911.7,741.9"/>
<path d="M602,201.2 L602,326"/>
</g>
<!-- dimensions -->
<g stroke="#52a2ff" stroke-width="2.1" fill="none">
<path d="M296,380 L296,737"/>
<path d="M297,740 L604,917"/>
<path d="M297.500,738.600 L386,688"/>
</g>
<g fill="#52a2ff" stroke="none">
<polygon points="296,377.6 292,402.5 300,402.5"/>
<polygon points="296,739.4 292.1,715.2 299.9,715.2"/>
<polygon points="296,739.4 315.5,724 319.7,731.2"/>
<polygon points="296,739.4 319.7,748.8 315.5,755.8"/>
<polygon points="606.2,918.3 586.4,903 582.7,909.7"/>
<polygon points="602,562.8 578.6,572.2 582.7,579.5"/>
</g>
<g fill="#e6e6e6" stroke="#52a2ff" stroke-width="2">
<rect x="294" y="541.5" width="46" height="24" rx="1"/>
<rect x="446.5" y="634.5" width="46" height="24" rx="1"/>
<rect x="448" y="812" width="44" height="24" rx="1"/>
</g>
<g font-family="Liberation Sans, sans-serif" font-size="16.5" fill="#3f4458" stroke="#e6e6e6" stroke-width="0.4" text-anchor="middle" letter-spacing="-0.2">
<text x="317" y="559.5">82,00</text>
<text x="469.5" y="652.5">80,00</text>
<text x="470" y="830">81,00</text>
</g>
<!-- axes -->
<g stroke="none">
<polygon points="65.4,883 69.4,882.3 77.1,886.8 81.4,884 89.9,897.1 75,895.7 73.6,890.8 65.4,885.8" fill="#e02028"/>
<polygon points="69.4,882.3 77.1,886.8 81.4,884 89.9,897.1 80,889.5" fill="#f0444a"/>
<polygon points="69.1,878 76.4,874.9 74.3,871.2 89.9,868.8 83.5,881.1 80.4,877.3 70.1,882.3 69.1,881.9" fill="#1cac24"/>
<polygon points="74.3,871.2 89.9,868.8 80.4,877.3" fill="#28c030"/>
<polygon points="65.8,856.8 71.9,867.4 70.8,871 69.1,871.7 69.1,882.3 63,882.3 63,871.7 61.1,871 60.2,867.4" fill="#1a3cd8"/>
<polygon points="65.8,856.8 71.9,867.4 70.8,871 69.1,871.7 69.1,882.3 66.800,882.3 66.800,871" fill="#1230b0"/>
</g>
<!--MD2-->
</svg>

<div class="a" id="vscroll"></div>

<!-- right panel -->
<div class="a" id="rightbg"></div>
<!-- structure panel -->

<div class="a" style="left:1242px;top:176px;width:290px;height:15px;border:1px solid #7d828c;border-right:none;background:linear-gradient(#dde9fb,#bdd3f2)"></div>
<div class="t" style="left:1248px;top:177px;color:#203f86;transform:scaleX(0.974);transform-origin:0 50%">Structure</div>
<svg style="left:1516px;top:179px" width="9" height="10" viewBox="0 0 9 10"><path d="M2.500,0.500h4v4.500h-4zM0.800,5h7.400M4.500,5v4.500" fill="none" stroke="#111" stroke-width="1.200"/><path d="M5.500,0.500v4.500" stroke="#111" stroke-width="1.400"/></svg>
<svg style="left:1245px;top:199px" width="15" height="16" viewBox="0 0 15 16"><defs><linearGradient id="gPn" x1="0" y1="0" x2="0" y2="1"><stop offset="0" stop-color="#fff"/><stop offset="1" stop-color="#cfdcf6"/></linearGradient></defs><rect x="0.700" y="0.700" width="13.300" height="6.600" fill="url(#gPn)" stroke="#1c4fd8" stroke-width="1.300"/><rect x="0.700" y="8.300" width="13.300" height="6.600" fill="url(#gPn)" stroke="#1c4fd8" stroke-width="1.300"/><rect x="0.200" y="0.200" width="14.300" height="2.800" fill="#1c4fd8"/><rect x="0.200" y="7.800" width="14.300" height="2.300" fill="#1c4fd8"/></svg>
<svg style="left:1269px;top:199px" width="16" height="16" viewBox="0 0 16 16"><defs><linearGradient id="gPv" x1="0" y1="0" x2="1" y2="0"><stop offset="0" stop-color="#cfdcf6"/><stop offset="1" stop-color="#fff"/></linearGradient></defs><rect x="0.700" y="0.700" width="6.800" height="14" fill="url(#gPv)" stroke="#1c3fb8" stroke-width="1.300"/><rect x="7.500" y="0.700" width="7.300" height="14" fill="url(#gPv)" stroke="#1c3fb8" stroke-width="1.300"/><rect x="0.200" y="0.200" width="15.200" height="2.300" fill="#1c4fd8"/></svg>
<svg style="left:1294px;top:199px" width="13" height="16" viewBox="0 0 13 16"><path d="M0.600,0.600h7.800l3.600,3.800v11H0.600z" fill="#e9ecfa" stroke="#a7a9d0" stroke-width="1.100"/><path d="M8.400,0.600v3.800h3.600" fill="#cfd3ea" stroke="#a7a9d0" stroke-width="0.800"/><path d="M3.500,8.200c1.300-1.700 3.700-1.700 5,-0.300M9,6v2.400h-2.400M8.800,11.300c-1.300,1.700-3.700,1.700-5,0.300M3.300,13.500v-2.400h2.400" fill="none" stroke="#14961e" stroke-width="1.400"/></svg>
<svg style="left:1318px;top:199px" width="15" height="16" viewBox="0 0 15 16"><rect x="0.600" y="0.600" width="11" height="12.600" fill="#f2f6ff" stroke="#1c5be0" stroke-width="1.200"/><rect x="2.500" y="2.500" width="7" height="9" fill="none" stroke="#222" stroke-width="1.100" stroke-dasharray="2 1.300"/><ellipse cx="8.500" cy="12" rx="5.800" ry="3.300" fill="#f0f0f0" stroke="#555" stroke-width="1.100"/><circle cx="8.500" cy="12" r="1.900" fill="#1c5be0"/></svg>
<svg style="left:1340px;top:199px" width="17" height="16" viewBox="0 0 17 16"><rect x="0.600" y="0.600" width="13.500" height="13" rx="2.200" fill="#f4f4f4" stroke="#222" stroke-width="1.100" stroke-dasharray="2 1.300"/><circle cx="5.500" cy="6" r="3" fill="#f5c51d"/><rect x="7.500" y="2" width="5.500" height="5.500" fill="#3aa43a" stroke="#2a8a2a" stroke-width="0.600"/><path d="M4,12l3.200-5.500 3,5.500z" fill="#dfe9ff" stroke="#1c5be0" stroke-width="1"/><path d="M7,11.500l2.800,3 6-6.500" fill="none" stroke="#0c9a14" stroke-width="1.800"/></svg>
<div class="a" style="left:1243px;top:222px;width:287px;height:21px;border:1px solid #8b8f96;background:#fff"></div>
<div class="a" style="left:1245px;top:224px;width:283px;height:18px;border:1px solid #9cb6da;border-top-color:#b7cbe8;background:linear-gradient(#e6effb,#c8d9f2)"></div>
<div class="a" style="left:1296px;top:225px;width:2px;height:16px;border-left:1px solid #b4c8e4;border-right:1px solid #f0f6fd"></div>
<div class="a" style="left:1346px;top:225px;width:2px;height:16px;border-left:1px solid #b4c8e4;border-right:1px solid #f0f6fd"></div>
<div class="a" style="left:1419px;top:225px;width:2px;height:16px;border-left:1px solid #b4c8e4;border-right:1px solid #f0f6fd"></div>
<div class="t" style="left:1252px;top:226px;color:#1e3a5f;transform:scaleX(0.941);transform-origin:0 50%">cst3d...</div>
<div class="t" style="left:1301px;top:226px;color:#1e3a5f;transform:scaleX(0.992);transform-origin:0 50%">Face_...</div>
<div class="t" style="left:1352px;top:226px;color:#1e3a5f;transform:scaleX(0.881);transform-origin:0 50%">Face_$DC3</div>
<div class="a" style="left:1243px;top:594px;width:288px;height:4px;background:#f0f0f0"></div>
<div class="a" style="left:1243px;top:242px;width:287px;height:352px;border:1px solid #8b8f96;background:#fff"></div>
<div class="a" style="left:1245px;top:243px;width:283px;height:349px;border:1px solid #a9adb3;border-top:none;background:#fff"></div>
<div class="a" style="left:1343px;top:425px;width:65px;height:18px;background:#d9d9d9"></div>
<svg style="left:1252px;top:251px" width="10" height="7" viewBox="0 0 10 7"><path d="M0.700,1l4,4 4-4" fill="none" stroke="#333" stroke-width="1.600"/></svg>
<div class="t" style="left:1273px;top:247px;transform:scaleX(1.019);transform-origin:0 50%">Model</div>
<svg style="left:1270px;top:269px" width="10" height="7" viewBox="0 0 10 7"><path d="M0.700,1l4,4 4-4" fill="none" stroke="#333" stroke-width="1.600"/></svg>
<div class="t" style="left:1291px;top:265px;transform:scaleX(0.968);transform-origin:0 50%">cst3dSolid</div>
<svg style="left:1288px;top:287px" width="10" height="7" viewBox="0 0 10 7"><path d="M0.700,1l4,4 4-4" fill="none" stroke="#333" stroke-width="1.600"/></svg>
<svg style="left:1306px;top:283px" width="13" height="13" viewBox="0 0 13 13"><rect x="0.500" y="0.500" width="12" height="12" fill="#fff" stroke="#333" stroke-width="1"/><path d="M2.800,6.600l2.600,2.700 5-5.800" fill="none" stroke="#333" stroke-width="1.100"/></svg>
<div class="t" style="left:1329px;top:283px;transform:scaleX(0.886);transform-origin:0 50%">Face_$DC9</div>
<svg style="left:1308px;top:303px" width="7" height="10" viewBox="0 0 7 10"><path d="M1,0.700l4,4-4,4" fill="none" stroke="#a2a2a2" stroke-width="1.300"/></svg>
<svg style="left:1324px;top:301px" width="13" height="13" viewBox="0 0 13 13"><rect x="0.500" y="0.500" width="12" height="12" fill="#fff" stroke="#333" stroke-width="1"/><path d="M2.800,6.600l2.600,2.700 5-5.800" fill="none" stroke="#333" stroke-width="1.100"/></svg>
<div class="t" style="left:1347px;top:301px;transform:scaleX(0.867);transform-origin:0 50%">Face_$DBC</div>
<svg style="left:1308px;top:321px" width="7" height="10" viewBox="0 0 7 10"><path d="M1,0.700l4,4-4,4" fill="none" stroke="#a2a2a2" stroke-width="1.300"/></svg>
<svg style="left:1324px;top:319px" width="13" height="13" viewBox="0 0 13 13"><rect x="0.500" y="0.500" width="12" height="12" fill="#fff" stroke="#333" stroke-width="1"/><path d="M2.800,6.600l2.600,2.700 5-5.800" fill="none" stroke="#333" stroke-width="1.100"/></svg>
<div class="t" style="left:1347px;top:319px;transform:scaleX(0.867);transform-origin:0 50%">Face_$DBD</div>
<svg style="left:1308px;top:339px" width="7" height="10" viewBox="0 0 7 10"><path d="M1,0.700l4,4-4,4" fill="none" stroke="#a2a2a2" stroke-width="1.300"/></svg>
<svg style="left:1324px;top:337px" width="13" height="13" viewBox="0 0 13 13"><rect x="0.500" y="0.500" width="12" height="12" fill="#fff" stroke="#333" stroke-width="1"/><path d="M2.800,6.600l2.600,2.700 5-5.800" fill="none" stroke="#333" stroke-width="1.100"/></svg>
<div class="t" style="left:1347px;top:337px;transform:scaleX(0.850);transform-origin:0 50%">Face_$DBE</div>
<svg style="left:1308px;top:357px" width="7" height="10" viewBox="0 0 7 10"><path d="M1,0.700l4,4-4,4" fill="none" stroke="#a2a2a2" stroke-width="1.300"/></svg>
<svg style="left:1324px;top:355px" width="13" height="13" viewBox="0 0 13 13"><rect x="0.500" y="0.500" width="12" height="12" fill="#fff" stroke="#333" stroke-width="1"/><path d="M2.800,6.600l2.600,2.700 5-5.800" fill="none" stroke="#333" stroke-width="1.100"/></svg>
<div class="t" style="left:1347px;top:355px;transform:scaleX(0.848);transform-origin:0 50%">Face_$DBF</div>
<svg style="left:1308px;top:375px" width="7" height="10" viewBox="0 0 7 10"><path d="M1,0.700l4,4-4,4" fill="none" stroke="#a2a2a2" stroke-width="1.300"/></svg>
<svg style="left:1324px;top:373px" width="13" height="13" viewBox="0 0 13 13"><rect x="0.500" y="0.500" width="12" height="12" fill="#fff" stroke="#333" stroke-width="1"/><path d="M2.800,6.600l2.600,2.700 5-5.800" fill="none" stroke="#333" stroke-width="1.100"/></svg>
<div class="t" style="left:1347px;top:373px;transform:scaleX(0.886);transform-origin:0 50%">Face_$DC0</div>
<svg style="left:1308px;top:393px" width="7" height="10" viewBox="0 0 7 10"><path d="M1,0.700l4,4-4,4" fill="none" stroke="#a2a2a2" stroke-width="1.300"/></svg>
<svg style="left:1324px;top:391px" width="13" height="13" viewBox="0 0 13 13"><rect x="0.500" y="0.500" width="12" height="12" fill="#fff" stroke="#333" stroke-width="1"/><path d="M2.800,6.600l2.600,2.700 5-5.800" fill="none" stroke="#333" stroke-width="1.100"/></svg>
<div class="t" style="left:1347px;top:391px;transform:scaleX(0.875);transform-origin:0 50%">Face_$DC1</div>
<svg style="left:1308px;top:411px" width="7" height="10" viewBox="0 0 7 10"><path d="M1,0.700l4,4-4,4" fill="none" stroke="#a2a2a2" stroke-width="1.300"/></svg>
<svg style="left:1324px;top:409px" width="13" height="13" viewBox="0 0 13 13"><rect x="0.500" y="0.500" width="12" height="12" fill="#fff" stroke="#333" stroke-width="1"/><path d="M2.800,6.600l2.600,2.700 5-5.800" fill="none" stroke="#333" stroke-width="1.100"/></svg>
<div class="t" style="left:1347px;top:409px;transform:scaleX(0.886);transform-origin:0 50%">Face_$DC2</div>
<svg style="left:1308px;top:429px" width="7" height="10" viewBox="0 0 7 10"><path d="M1,0.700l4,4-4,4" fill="none" stroke="#a2a2a2" stroke-width="1.300"/></svg>
<svg style="left:1324px;top:427px" width="13" height="13" viewBox="0 0 13 13"><rect x="0.500" y="0.500" width="12" height="12" fill="#fff" stroke="#333" stroke-width="1"/><path d="M2.800,6.600l2.600,2.700 5-5.800" fill="none" stroke="#333" stroke-width="1.100"/></svg>
<div class="t" style="left:1347px;top:427px;transform:scaleX(0.875);transform-origin:0 50%">Face_$DC3</div>
<svg style="left:1308px;top:447px" width="7" height="10" viewBox="0 0 7 10"><path d="M1,0.700l4,4-4,4" fill="none" stroke="#a2a2a2" stroke-width="1.300"/></svg>
<svg style="left:1324px;top:445px" width="13" height="13" viewBox="0 0 13 13"><rect x="0.500" y="0.500" width="12" height="12" fill="#fff" stroke="#333" stroke-width="1"/><path d="M2.800,6.600l2.600,2.700 5-5.800" fill="none" stroke="#333" stroke-width="1.100"/></svg>
<div class="t" style="left:1347px;top:445px;transform:scaleX(0.886);transform-origin:0 50%">Face_$DC4</div>
<svg style="left:1308px;top:465px" width="7" height="10" viewBox="0 0 7 10"><path d="M1,0.700l4,4-4,4" fill="none" stroke="#a2a2a2" stroke-width="1.300"/></svg>
<svg style="left:1324px;top:463px" width="13" height="13" viewBox="0 0 13 13"><rect x="0.500" y="0.500" width="12" height="12" fill="#fff" stroke="#333" stroke-width="1"/><path d="M2.800,6.600l2.600,2.700 5-5.800" fill="none" stroke="#333" stroke-width="1.100"/></svg>
<div class="t" style="left:1347px;top:463px;transform:scaleX(0.886);transform-origin:0 50%">Face_$DC5</div>
<svg style="left:1308px;top:483px" width="7" height="10" viewBox="0 0 7 10"><path d="M1,0.700l4,4-4,4" fill="none" stroke="#a2a2a2" stroke-width="1.300"/></svg>
<svg style="left:1324px;top:481px" width="13" height="13" viewBox="0 0 13 13"><rect x="0.500" y="0.500" width="12" height="12" fill="#fff" stroke="#333" stroke-width="1"/><path d="M2.800,6.600l2.600,2.700 5-5.800" fill="none" stroke="#333" stroke-width="1.100"/></svg>
<div class="t" style="left:1347px;top:481px;transform:scaleX(0.886);transform-origin:0 50%">Face_$DC6</div>
<div class="a" style="left:1243px;top:598px;width:287px;height:343px;border:1px solid #8b8f96;background:#fff"></div>
<div class="a" style="left:1245px;top:600px;width:283px;height:340px;border:1px solid #a9adb3;background:#fff"></div>
<div class="a" style="left:1386px;top:602px;width:1px;height:23px;background:#e0e0e0"></div>
<div class="a" style="left:1525px;top:602px;width:1px;height:23px;background:#e0e0e0"></div>
<div class="t" style="left:1253px;top:607px;transform:scaleX(0.978);transform-origin:0 50%">Name</div>
<div class="t" style="left:1393px;top:607px;transform:scaleX(0.929);transform-origin:0 50%">Value</div>
<div class="t" style="left:1253px;top:629px;transform:scaleX(1.013);transform-origin:0 50%">minX</div>
<div class="t sm" style="left:1393px;top:629px;transform:scaleX(0.904);transform-origin:0 50%">-40,000000003</div>
<div class="t" style="left:1253px;top:648px;transform:scaleX(0.978);transform-origin:0 50%">maxX</div>
<div class="t sm" style="left:1393px;top:648px;transform:scaleX(0.883);transform-origin:0 50%">40</div>
<div class="t" style="left:1253px;top:667px;transform:scaleX(0.995);transform-origin:0 50%">minY</div>
<div class="t sm" style="left:1393px;top:667px;transform:scaleX(0.969);transform-origin:0 50%">-40</div>
<div class="t" style="left:1253px;top:686px;transform:scaleX(0.961);transform-origin:0 50%">maxY</div>
<div class="t sm" style="left:1393px;top:686px;transform:scaleX(0.883);transform-origin:0 50%">40</div>
<div class="t" style="left:1253px;top:705px;transform:scaleX(1.039);transform-origin:0 50%">minZ</div>
<div class="t sm" style="left:1393px;top:705px;transform:scaleX(0.908);transform-origin:0 50%">-0,001</div>
<div class="t" style="left:1253px;top:724px;transform:scaleX(1.000);transform-origin:0 50%">maxZ</div>
<div class="t sm" style="left:1393px;top:724px;transform:scaleX(0.877);transform-origin:0 50%">49,999</div>
<div class="t" style="left:1253px;top:743px;transform:scaleX(0.926);transform-origin:0 50%">dX</div>
<div class="t sm" style="left:1393px;top:743px;transform:scaleX(0.886);transform-origin:0 50%">80,000000003</div>
<div class="t" style="left:1253px;top:762px;transform:scaleX(0.899);transform-origin:0 50%">dY</div>
<div class="t sm" style="left:1393px;top:762px;transform:scaleX(0.883);transform-origin:0 50%">80</div>
<div class="t" style="left:1253px;top:781px;transform:scaleX(0.942);transform-origin:0 50%">dZ</div>
<div class="t sm" style="left:1393px;top:781px;transform:scaleX(0.883);transform-origin:0 50%">50</div>
<div class="a" style="left:1243px;top:942px;width:287px;height:22px;border:1px solid #8b8f96;background:#fff"></div>
<div class="a" style="left:1245px;top:944px;width:283px;height:18px;border:1px solid #a9adb3;background:#fff"></div>
<div class="t" style="left:1248px;top:945px;color:#7a7a7a;font-size:12px;transform:scaleX(0.930);transform-origin:0 50%">Type to filter</div>
<svg style="left:1225px;top:180px" width="9" height="7" viewBox="0 0 9 7"><path d="M1,5.500l3.500-3.500 3.500,3.500" fill="none" stroke="#404040" stroke-width="2"/></svg>
<svg style="left:1225px;top:935px" width="9" height="7" viewBox="0 0 9 7"><path d="M1,1.500l3.500,3.500 3.500-3.500" fill="none" stroke="#404040" stroke-width="2"/></svg>
<div class="a" style="left:1222px;top:551px;width:15px;height:18px;background:#cdcdcd"></div>

<!-- bottom -->
<div class="a" id="bottomrow"></div>
<svg style="left:0px;top:946px" width="80" height="22" viewBox="0 0 80 22"><path d="M8,0.500L14.500,18.500H54.500L61,0.500" fill="#d3e1f3" stroke="#8fa3bf" stroke-width="1"/></svg>
<div class="t" style="left:18px;top:948px;transform:scaleX(0.964);transform-origin:0 50%">Model</div>
<div class="a" style="left:779px;top:950px;width:18px;height:17px;border:1px solid #8ea6c8;border-radius:3px;background:linear-gradient(#eef4fc,#d3e0f2)"></div>
<svg style="left:783px;top:955px" width="10" height="8" viewBox="0 0 10 8"><path d="M5,6.800L1.300,3.200c-1.200-1.500 1.200-3.200 3.700-0.700c2.500-2.500 4.900-0.800 3.700,0.700z" fill="#fff8d8" stroke="#555" stroke-width="0.900"/></svg>
<div class="a" style="left:801px;top:948px;width:2px;height:19px;background:repeating-linear-gradient(#8e9db5 0 2px,transparent 2px 4px)"></div>
<div class="a" style="left:806px;top:947px;width:415px;height:18px;background:#f0f0f0;border-top:1px solid #fff;border-bottom:1px solid #fff"></div>
<div class="a" style="left:1004px;top:948px;width:17px;height:15px;background:#cdcdcd"></div>
<svg style="left:809px;top:951px" width="6" height="9" viewBox="0 0 6 9"><path d="M4.800,1L1.300,4.500 4.800,8" fill="none" stroke="#404040" stroke-width="2"/></svg>
<svg style="left:1210px;top:951px" width="6" height="9" viewBox="0 0 6 9"><path d="M1.200,1L4.700,4.500 1.200,8" fill="none" stroke="#404040" stroke-width="2"/></svg>
<div class="a" style="left:1222px;top:947px;width:16px;height:21px;background:linear-gradient(#eff5fd,#c6d8f0)"></div>
<div class="a" style="left:1238px;top:947px;width:4px;height:21px;background:#f2f2f2"></div>
<div class="a" id="status"></div>
<div class="t" style="left:9px;top:971px;color:#1f3b77;transform:scaleX(0.935);transform-origin:0 50%">SAT model.SAT</div>
<div class="t" style="left:887px;top:971px;color:#1f3b77;transform:scaleX(1.087);transform-origin:0 50%">7/18</div>
<div class="t" style="left:1067px;top:971px;color:#1f3b77;transform:scaleX(0.992);transform-origin:0 50%">(191,6047; -38,87168; 215,9323)</div>
<div class="a" style="left:882px;top:969px;width:2px;height:17px;border-left:1px solid #b9c9df;border-right:1px solid #f4f8fd"></div>
<div class="a" style="left:982px;top:969px;width:2px;height:17px;border-left:1px solid #b9c9df;border-right:1px solid #f4f8fd"></div>
<div class="a" style="left:1002px;top:969px;width:2px;height:17px;border-left:1px solid #b9c9df;border-right:1px solid #f4f8fd"></div>
<div class="a" style="left:1022px;top:969px;width:2px;height:17px;border-left:1px solid #b9c9df;border-right:1px solid #f4f8fd"></div>
<div class="a" style="left:1041px;top:969px;width:2px;height:17px;border-left:1px solid #b9c9df;border-right:1px solid #f4f8fd"></div>
<div class="a" style="left:1062px;top:969px;width:2px;height:17px;border-left:1px solid #b9c9df;border-right:1px solid #f4f8fd"></div>
<div class="a" style="left:1311px;top:969px;width:2px;height:17px;border-left:1px solid #b9c9df;border-right:1px solid #f4f8fd"></div>
<div class="a" style="left:1433px;top:969px;width:2px;height:17px;border-left:1px solid #b9c9df;border-right:1px solid #f4f8fd"></div>
<svg style="left:984px;top:969px" width="16" height="17" viewBox="0 0 16 17"><path d="M2.500,14.500V7.500c0-6.500 8.500-6.500 8.500,0V11.500l3,3" fill="none" stroke="#8e8e8e" stroke-width="4"/></svg>
<svg style="left:1003px;top:969px" width="16" height="17" viewBox="0 0 16 17"><g fill="#8e8e8e"><circle cx="2.500" cy="3" r="1.300"/><circle cx="8" cy="3" r="1.300"/><circle cx="13.500" cy="3" r="1.300"/><circle cx="2.500" cy="8.500" r="1.300"/><circle cx="8" cy="8.500" r="1.300"/><circle cx="13.500" cy="8.500" r="1.300"/><circle cx="2.500" cy="14" r="1.300"/><circle cx="8" cy="14" r="1.300"/><circle cx="13.500" cy="14" r="1.300"/></g></svg>
<svg style="left:1023px;top:969px" width="16" height="17" viewBox="0 0 16 17"><path d="M8,2.500V13.500M1,13.500H15" fill="none" stroke="#8e8e8e" stroke-width="1.600"/></svg>
<svg style="left:1043px;top:968px" width="18" height="18" viewBox="0 0 18 18"><path d="M4,5.500h6.500l2,3.500-2,5H4l-2.500-4z" fill="#8e8e8e"/><path d="M4,11.500L14.500,0.500M11,9.500h6" stroke="#8e8e8e" stroke-width="1.300" fill="none"/><path d="M3,10l5-4.500" stroke="#e6eef9" stroke-width="1.400"/></svg>
<svg style="left:1519px;top:975px" width="10" height="10" viewBox="0 0 10 10"><g fill="#7f93b3"><rect x="7" y="1" width="2" height="2"/><rect x="4" y="4" width="2" height="2"/><rect x="7" y="4" width="2" height="2"/><rect x="1" y="7" width="2" height="2"/><rect x="4" y="7" width="2" height="2"/><rect x="7" y="7" width="2" height="2"/></g></svg>

<div class="a" id="frame"></div>
</body></html>
